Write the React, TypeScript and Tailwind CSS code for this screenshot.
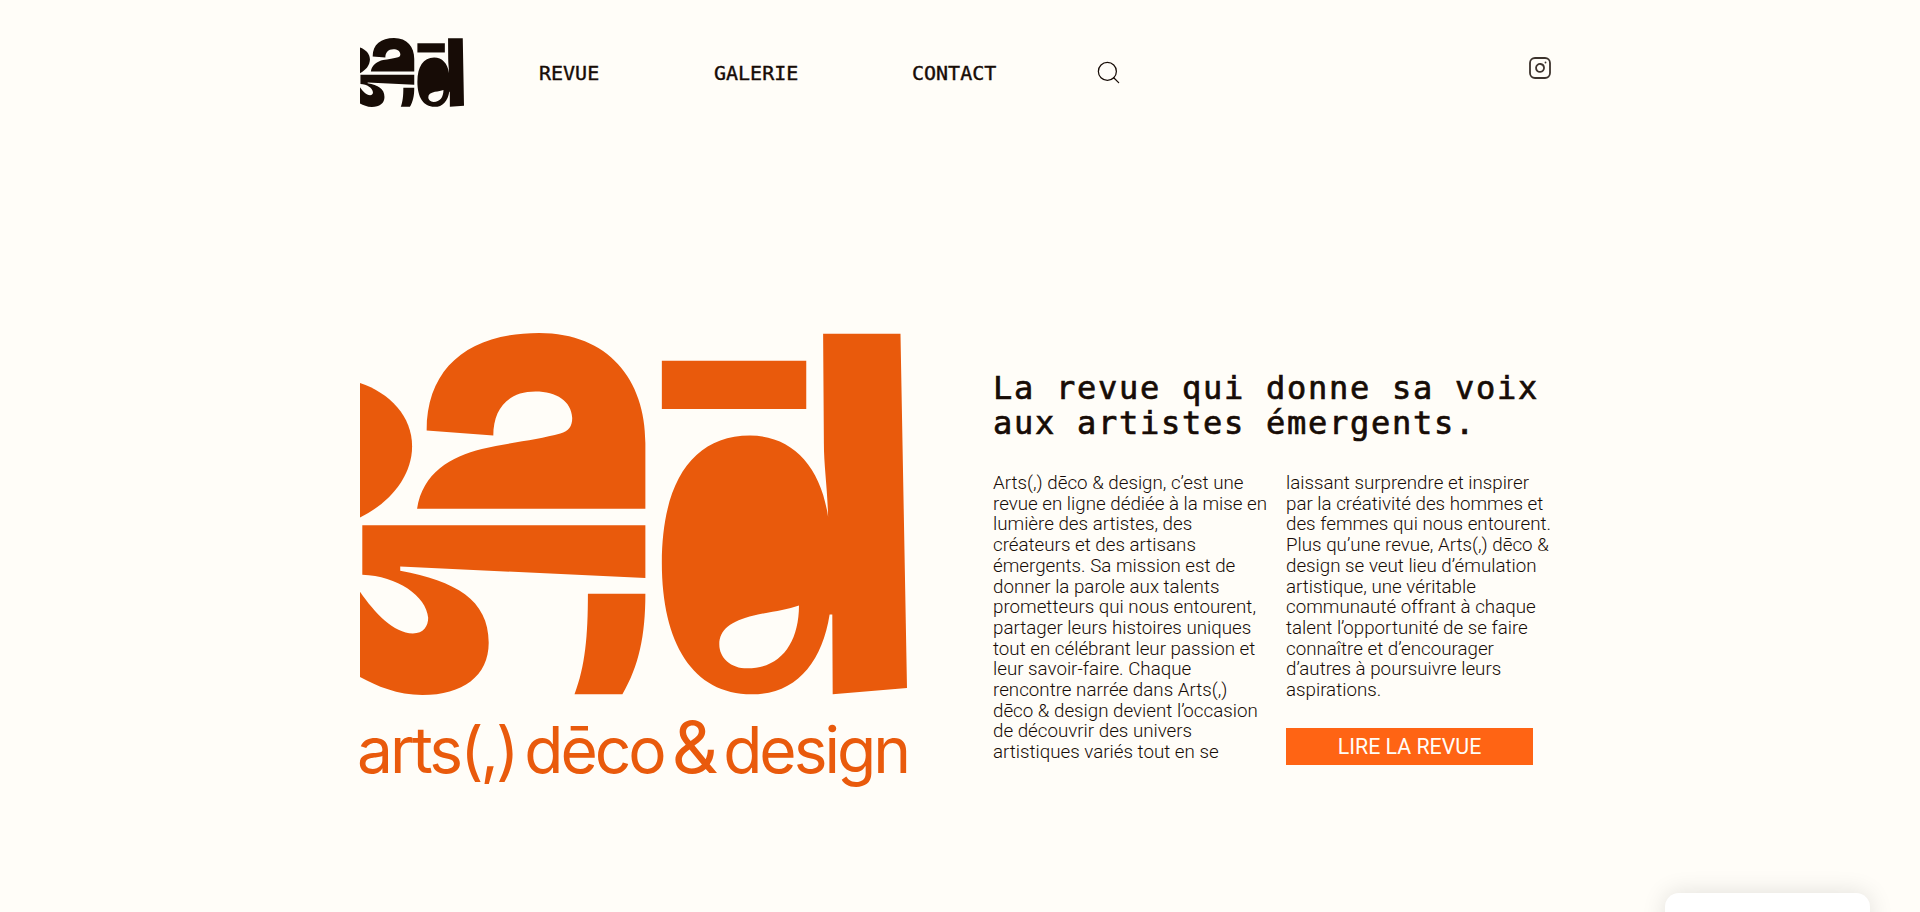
import { Instagram, Search } from 'lucide-react';

const columnOne = [
  'Arts(,) dēco & design, c’est une',
  'revue en ligne dédiée à la mise en',
  'lumière des artistes, des',
  'créateurs et des artisans',
  'émergents. Sa mission est de',
  'donner la parole aux talents',
  'prometteurs qui nous entourent,',
  'partager leurs histoires uniques',
  'tout en célébrant leur passion et',
  'leur savoir-faire. Chaque',
  'rencontre narrée dans Arts(,)',
  'dēco & design devient l’occasion',
  'de découvrir des univers',
  'artistiques variés tout en se',
];

const columnTwo = [
  'laissant surprendre et inspirer',
  'par la créativité des hommes et',
  'des femmes qui nous entourent.',
  'Plus qu’une revue, Arts(,) dēco &',
  'design se veut lieu d’émulation',
  'artistique, une véritable',
  'communauté offrant à chaque',
  'talent l’opportunité de se faire',
  'connaître et d’encourager',
  'd’autres à poursuivre leurs',
  'aspirations.',
];

function Logo({ className }: { className: string }) {
  return (
    <svg viewBox="52 70 1428 1087" preserveAspectRatio="none" className={className} fill="currentColor" fillRule="evenodd">
      <path d="M52 220C130 250 188 320 188 410C188 500 130 580 52 624Z" />
      <path d="M226 363C226 170 340 70 520 70C700 70 797 210 797 400L797 598L201 598C215 490 290 440 370 418C440 400 520 390 575 372C597 364 606 350 606 325C604 275 565 246 510 246C440 246 400 295 400 378Z" />
      <path d="M58 647L797 647L797 806L157 771L157 784C300 815 388 870 388 1000C388 1100 320 1157 215 1157C150 1157 95 1130 52 1103L52 847C90 910 140 972 190 972C218 972 230 950 230 925C225 860 150 800 58 796Z" />
      <path d="M647 853L797 853C797 980 780 1070 737 1155L612 1155C640 1070 647 980 647 853Z" />
      <path d="M840 153L1217 153L1217 298L840 298Z" />
      <path d="M1261 72L1463 72L1480 1136L1286 1155L1285 915L1278 915C1258 1060 1190 1155 1075 1155C920 1155 840 1000 840 760C840 520 920 378 1070 378C1180 378 1255 470 1274 622C1272 530 1263 470 1263 400ZM1198 888C1198 1000 1150 1077 1063 1077C1020 1077 990 1045 990 1005C990 960 1020 935 1080 918C1130 905 1165 902 1198 888Z" />
    </svg>
  );
}

export default function App() {
  return (
    <div className="relative h-[912px] overflow-hidden bg-[#fffdf8] font-['Roboto',sans-serif] text-[#170c06]">
      <div className="mx-auto w-[1200px]">
        <header className="flex h-[107px] pt-[38px]">
          <Logo className="h-[69px] w-[104px]" />
          <nav className="ml-[75px] flex h-[69px] items-center font-['DejaVu_Sans_Mono',monospace] text-[20px] [-webkit-text-stroke:0.4px_#170c06]">
            <a className="w-[175px]">REVUE</a>
            <a className="w-[198px]">GALERIE</a>
            <a className="w-[183px]">CONTACT</a>
            <Search className="h-[27px] w-[27px]" strokeWidth={1.1} />
          </nav>
          <Instagram className="ml-[406px] mt-[18px] h-[24px] w-[24px] text-[#3d332d]" strokeWidth={1.8} />
        </header>

        <main className="mt-[226px] flex">
          <div className="w-[633px] shrink-0">
            <Logo className="h-[362px] w-[547px] text-[#e95a0c]" />
            <div className="ml-[-3px] mt-[17px] flex w-[551px] items-baseline justify-between font-['Inter',sans-serif] text-[64px] leading-[70px] font-normal tracking-[-3px] text-[#e95a0c]">
              <span>arts(,)</span>
              <span>dēco</span>
              <span className="text-[72px] leading-[70px]">&amp;</span>
              <span>design</span>
            </div>
          </div>

          <div className="w-[567px] pt-[38px]">
            <h1 className="whitespace-nowrap font-['DejaVu_Sans_Mono',monospace] text-[32px] leading-[35px] tracking-[1.73px] [-webkit-text-stroke:0.7px_#170c06]">
              La revue qui donne sa voix
              <br />
              aux artistes émergents.
            </h1>
            <div className="mt-[32px] flex text-[18.75px] leading-[20.7px] font-light whitespace-nowrap">
              <p className="w-[293px]">
                {columnOne.map((line) => (
                  <span key={line} className="block">{line}</span>
                ))}
              </p>
              <div>
                <p>
                  {columnTwo.map((line) => (
                    <span key={line} className="block">{line}</span>
                  ))}
                </p>
                <a className="mt-[27px] flex h-[37px] w-[247px] items-center justify-center bg-[#ff6414] pt-[2px] text-[21.33px] font-normal text-[#fffdf8]">
                  LIRE LA REVUE
                </a>
              </div>
            </div>
          </div>
        </main>
      </div>

      <div className="absolute bottom-[-20px] right-[50px] h-[39px] w-[205px] rounded-t-[14px] bg-white shadow-[0_0_24px_rgba(0,0,0,0.12)]" />
    </div>
  );
}
